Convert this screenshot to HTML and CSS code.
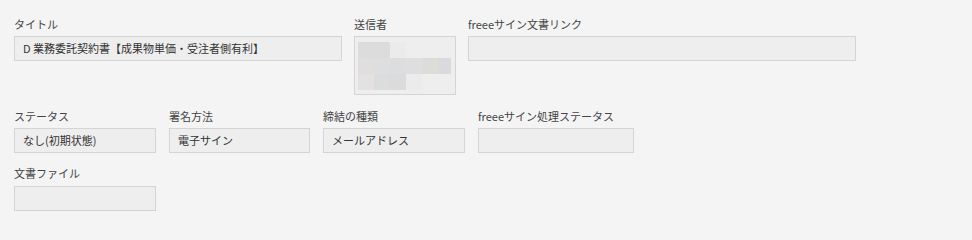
FILE: index.html
```html
<!DOCTYPE html>
<html lang="ja">
<head>
<meta charset="utf-8">
<title>文書詳細</title>
<link rel="stylesheet" href="styles.css">
</head>
<body>
<div class="form">
  <div class="row row-1">
    <div class="field w-title">
      <div class="label">タイトル</div>
      <div class="box">D 業務委託契約書【成果物単価・受注者側有利】</div>
    </div>
    <div class="field w-sender">
      <div class="label">送信者</div>
      <div class="box box-tall">
        <div class="mosaic">
          <span class="m1"></span><span class="m1"></span><span class="m2"></span><span></span><span></span><span></span>
          <span class="m3"></span><span class="m4"></span><span class="m5"></span><span class="m4"></span><span class="m6"></span><span class="m7"></span>
          <span class="m8"></span><span class="m9"></span><span class="m10"></span><span class="m2"></span><span></span><span></span>
        </div>
      </div>
    </div>
    <div class="field w-link">
      <div class="label">freeeサイン文書リンク</div>
      <div class="box"></div>
    </div>
  </div>
  <div class="row row-2">
    <div class="field w-142">
      <div class="label">ステータス</div>
      <div class="box">なし(初期状態)</div>
    </div>
    <div class="field w-141">
      <div class="label">署名方法</div>
      <div class="box">電子サイン</div>
    </div>
    <div class="field w-142">
      <div class="label">締結の種類</div>
      <div class="box">メールアドレス</div>
    </div>
    <div class="field w-156">
      <div class="label">freeeサイン処理ステータス</div>
      <div class="box"></div>
    </div>
  </div>
  <div class="row row-3">
    <div class="field w-142">
      <div class="label">文書ファイル</div>
      <div class="box"></div>
    </div>
  </div>
</div>
</body>
</html>
```
FILE: styles.css
```css
html, body {
  margin: 0;
  padding: 0;
  background: #f4f4f4;
}
body {
  font-family: "Noto Sans CJK JP", "Noto Sans", sans-serif;
  font-size: 11px;
  color: #333;
}
.form {
  padding: 16px 14px 0 14px;
}
.row {
  display: flex;
  align-items: flex-start;
}
.row-1 { gap: 12px; }
.row-2 { gap: 13px; margin-top: 13px; }
.row-3 { gap: 13px; margin-top: 12px; }
.field {
  display: flex;
  flex-direction: column;
}
.label {
  line-height: 16px;
  height: 16px;
  color: #444;
  margin-bottom: 4px;
  white-space: nowrap;
}
.row-3 .label { margin-bottom: 5px; }
.box {
  box-sizing: border-box;
  height: 25px;
  background: #eeeeee;
  border: 1px solid #d4d4d4;
  padding: 3px 8px 0 8px;
  line-height: 16px;
  color: #333;
  white-space: nowrap;
  overflow: hidden;
}
.box-tall {
  height: 59px;
  padding: 5px 3px 0 3px;
}
.w-title { width: 328px; }
.w-sender { width: 102px; }
.w-link { width: 388px; }
.w-141 { width: 141px; }
.w-142 { width: 142px; }
.w-156 { width: 156px; }

.mosaic {
  display: grid;
  grid-template-columns: repeat(5, 16px) 13px;
  grid-auto-rows: 16px;
}
.mosaic span { display: block; }
.m1 { background: #dcdcdc; }
.m2 { background: #ebebeb; }
.m3 { background: #e0dfdd; }
.m4 { background: #dedee0; }
.m5 { background: #dcdddf; }
.m6 { background: #dcdcd9; }
.m7 { background: #d9dadd; }
.m8 { background: #e3e1e1; }
.m9 { background: #dadcde; }
.m10 { background: #dbdbdb; }
```
